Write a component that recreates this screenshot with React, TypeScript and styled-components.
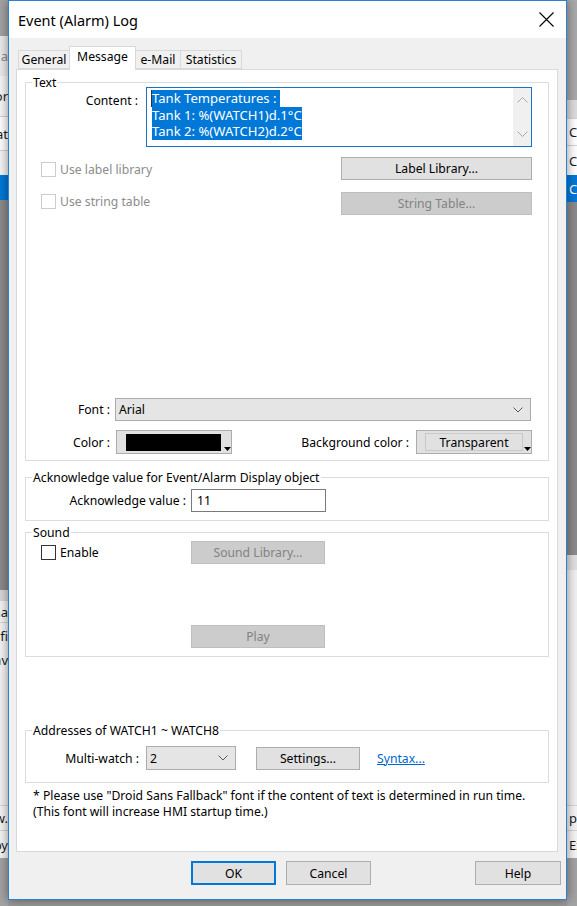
import React from "react";
import styled, { createGlobalStyle } from "styled-components";

const UI_FONT = `"Noto Sans", "Liberation Sans", Arial, sans-serif`;

const GlobalStyle = createGlobalStyle`
  html, body { margin: 0; padding: 0; }
  body { background: #9b9b9b; font-family: ${UI_FONT}; }
  * { box-sizing: border-box; }
`;

type StripRow = { h: number; bg: string; text?: string; color?: string; line?: boolean };

const leftRows: StripRow[] = [
  { h: 36, bg: "#a3a3a3" },
  { h: 40, bg: "#ececec", text: "la", color: "#8a8a8a" },
  { h: 40, bg: "#f7f7f7", text: "or" },
  { h: 34, bg: "#ffffff", text: "at", line: true },
  { h: 25, bg: "#f5f5f5", line: true },
  { h: 25, bg: "#0078d7" },
  { h: 390, bg: "#8b8b8b" },
  { h: 10, bg: "#d8d8d8" },
  { h: 22, bg: "#f4f4f4", text: "na", line: true },
  { h: 26, bg: "#f4f4f4", text: "fi", line: true },
  { h: 24, bg: "#f4f4f4", text: "av" },
  { h: 133, bg: "#f2f2f2" },
  { h: 25, bg: "#f4f4f4", text: "w.", line: true },
  { h: 28, bg: "#f4f4f4", text: "py", line: true },
  { h: 48, bg: "#a3a3a3" },
];

const rightRows: StripRow[] = [
  { h: 100, bg: "#a9a9a9" },
  { h: 18, bg: "#dcdcdc" },
  { h: 27, bg: "#ffffff", text: "C", line: true },
  { h: 30, bg: "#ffffff", text: "C", line: true },
  { h: 27, bg: "#0078d7", text: "C", color: "#ffffff" },
  { h: 353, bg: "#8b8b8b" },
  { h: 15, bg: "#e0e0e0" },
  { h: 235, bg: "#f0f0f0" },
  { h: 25, bg: "#f4f4f4", text: "p", line: true },
  { h: 28, bg: "#f4f4f4", text: "Ex", line: true },
  { h: 48, bg: "#a3a3a3" },
];

const App = () => {
  return (
    <>
      <GlobalStyle />
      <Screen>
        <Backdrop>
          <Strip $w={8} $align="flex-end">
            {leftRows.map((r, i) => (
              <BgRow key={i} $h={r.h} $bg={r.bg} $line={r.line} $color={r.color}>
                {r.text}
              </BgRow>
            ))}
          </Strip>
          <Strip $w={10} $align="flex-start">
            {rightRows.map((r, i) => (
              <BgRow key={i} $h={r.h} $bg={r.bg} $line={r.line} $color={r.color} $pad={2}>
                {r.text}
              </BgRow>
            ))}
          </Strip>
        </Backdrop>

        <Dialog>
          <TitleBar>
            <Title>Event (Alarm) Log</Title>
            <CloseBox>
              <svg width="15" height="15" viewBox="0 0 15 15">
                <path d="M0.5 0.5 L14.5 14.5 M14.5 0.5 L0.5 14.5" stroke="#000" strokeWidth="1.1" />
              </svg>
            </CloseBox>
          </TitleBar>

          <TabStrip>
            <Tab $w={52}>General</Tab>
            <Tab $w={67} $active>Message</Tab>
            <Tab $w={46}>e-Mail</Tab>
            <Tab $w={62}>Statistics</Tab>
          </TabStrip>

          <Panel>
            <Group $h={379}>
              <GroupTitle>Text</GroupTitle>
              <ContentRow>
                <FieldLabel $w={112} $top={5}>Content :</FieldLabel>
                <TextBox>
                  <TextLines>
                    <Line>
                      <Caret />
                      <Sel>Tank Temperatures : </Sel>
                    </Line>
                    <Line>
                      <Sel>Tank 1: %(WATCH1)d.1°C</Sel>
                    </Line>
                    <Line>
                      <Sel>Tank 2: %(WATCH2)d.2°C</Sel>
                    </Line>
                  </TextLines>
                  <ScrollBar>
                    <svg width="11" height="6" viewBox="0 0 11 6">
                      <polyline points="0.5,5.5 5.5,0.5 10.5,5.5" fill="none" stroke="#a8a8a8" />
                    </svg>
                    <svg width="11" height="6" viewBox="0 0 11 6">
                      <polyline points="0.5,0.5 5.5,5.5 10.5,0.5" fill="none" stroke="#a8a8a8" />
                    </svg>
                  </ScrollBar>
                </TextBox>
              </ContentRow>

              <CheckRow $mt={10}>
                <Check $dy={4}>
                  <Box $disabled />
                  <CheckText $disabled>Use label library</CheckText>
                </Check>
                <Button $w={191}>Label Library...</Button>
              </CheckRow>
              <CheckRow $mt={12}>
                <Check $dy={1}>
                  <Box $disabled />
                  <CheckText $disabled>Use string table</CheckText>
                </Check>
                <Button $w={191} $disabled>String Table...</Button>
              </CheckRow>

              <FontRow>
                <FieldLabel $w={84}>Font :</FieldLabel>
                <Select $w={416}>
                  <span>Arial</span>
                  <Chevron />
                </Select>
              </FontRow>
              <ColorRow>
                <FieldLabel $w={84}>Color :</FieldLabel>
                <SwatchButton>
                  <Swatch />
                  <MiniArrow />
                </SwatchButton>
                <BgLabel>Background color :</BgLabel>
                <TransparentButton>
                  <TransparentFace>Transparent</TransparentFace>
                  <MiniArrow />
                </TransparentButton>
              </ColorRow>
            </Group>

            <Group $h={44} $mt={16}>
              <GroupTitle>Acknowledge value for Event/Alarm Display object</GroupTitle>
              <AckRow>
                <FieldLabel $w={160}>Acknowledge value :</FieldLabel>
                <Input>11</Input>
              </AckRow>
            </Group>

            <Group $h={125} $mt={11}>
              <GroupTitle>Sound</GroupTitle>
              <SoundGrid>
                <Check>
                  <Box />
                  <CheckText>Enable</CheckText>
                </Check>
                <Button $w={134} $disabled>Sound Library...</Button>
                <span />
                <Button $w={134} $disabled>Play</Button>
              </SoundGrid>
            </Group>

            <Group $h={53} $mt={73}>
              <GroupTitle>Addresses of WATCH1 ~ WATCH8</GroupTitle>
              <WatchRow>
                <FieldLabel $w={113}>Multi-watch :</FieldLabel>
                <Select $w={90} $h={24}>
                  <span>2</span>
                  <Chevron />
                </Select>
                <Button $w={104} $ml={20}>Settings...</Button>
                <Link>Syntax...</Link>
              </WatchRow>
            </Group>

            <Note>
              * Please use "Droid Sans Fallback" font if the content of text is determined in run time.
              <br />
              (This font will increase HMI startup time.)
            </Note>
          </Panel>

          <Footer>
            <Button $w={85} $h={24} $default>OK</Button>
            <Button $w={85} $h={24}>Cancel</Button>
            <Button $w={86} $h={24} $ml="auto">Help</Button>
          </Footer>
        </Dialog>
      </Screen>
    </>
  );
};

const Chevron = () => (
  <svg width="10" height="6" viewBox="0 0 10 6">
    <polyline points="0.5,0.5 5,5 9.5,0.5" fill="none" stroke="#5a5a5a" />
  </svg>
);

const MiniArrow = () => (
  <svg width="7" height="4" viewBox="0 0 7 4" style={{ alignSelf: "flex-end", marginBottom: 2 }}>
    <polygon points="0,0 7,0 3.5,4" fill="#000" />
  </svg>
);

const Screen = styled.div`
  position: relative;
  width: 577px;
  height: 906px;
  overflow: hidden;
  background: #9b9b9b;
`;

const Backdrop = styled.div`
  display: flex;
  justify-content: space-between;
  height: 100%;
`;

const Strip = styled.div<{ $w: number; $align: string }>`
  width: ${(p) => p.$w}px;
  display: flex;
  flex-direction: column;
  align-items: stretch;
  overflow: hidden;
  & > div {
    justify-content: ${(p) => p.$align};
  }
`;

const BgRow = styled.div<{ $h: number; $bg: string; $line?: boolean; $color?: string; $pad?: number }>`
  height: ${(p) => p.$h}px;
  flex: none;
  background: ${(p) => p.$bg};
  border-top: ${(p) => (p.$line ? "1px solid #d4d4d4" : "none")};
  display: flex;
  align-items: center;
  padding-left: ${(p) => p.$pad || 0}px;
  font-size: 13px;
  color: ${(p) => p.$color || "#1a1a1a"};
  white-space: nowrap;
`;

const Dialog = styled.div`
  position: absolute;
  left: 8px;
  top: 0;
  width: 559px;
  height: 900px;
  border: 1px solid #2b7fd4;
  background: #f0f0f0;
  box-shadow: 0 0 10px rgba(0, 0, 0, 0.45);
  display: flex;
  flex-direction: column;
  font-family: ${UI_FONT};
  font-size: 12.2px;
  color: #000;
`;

const TitleBar = styled.div`
  height: 37px;
  flex: none;
  background: #ffffff;
  display: flex;
  align-items: center;
  justify-content: space-between;
  padding-left: 9px;
`;

const Title = styled.div`
  font-size: 14.5px;
  margin-top: 1px;
`;

const CloseBox = styled.div`
  width: 40px;
  height: 37px;
  display: flex;
  align-items: center;
  justify-content: center;
`;

const TabStrip = styled.div`
  height: 31px;
  flex: none;
  display: flex;
  align-items: flex-end;
  margin: 0 8px 0 7px;
  padding-left: 2px;
  position: relative;
  z-index: 1;
`;

const Tab = styled.div<{ $w: number; $active?: boolean }>`
  width: ${(p) => p.$w}px;
  height: ${(p) => (p.$active ? 24 : 19)}px;
  margin-bottom: ${(p) => (p.$active ? -1 : 0)}px;
  background: ${(p) => (p.$active ? "#ffffff" : "#f0f0f0")};
  border: 1px solid #d9d9d9;
  border-bottom: ${(p) => (p.$active ? "none" : "1px solid #d9d9d9")};
  margin-left: -1px;
  display: flex;
  justify-content: center;
  padding-top: ${(p) => (p.$active ? 2 : 1)}px;
  line-height: 16px;
  &:first-child {
    margin-left: 0;
  }
`;

const Panel = styled.div`
  height: 783px;
  flex: none;
  margin: 0 8px 0 7px;
  background: #ffffff;
  border: 1px solid #d9d9d9;
  padding: 12px 8px 0 8px;
  display: flex;
  flex-direction: column;
`;

const Group = styled.div<{ $h: number; $mt?: number }>`
  position: relative;
  height: ${(p) => p.$h}px;
  flex: none;
  margin-top: ${(p) => p.$mt || 0}px;
  border: 1px solid #dcdcdc;
  display: flex;
  flex-direction: column;
`;

const GroupTitle = styled.div`
  position: absolute;
  top: -8px;
  left: 6px;
  background: #ffffff;
  padding: 0 1px;
  line-height: 15px;
`;

const FieldLabel = styled.div<{ $w: number; $top?: number }>`
  width: ${(p) => p.$w}px;
  flex: none;
  text-align: right;
  padding-top: ${(p) => p.$top || 0}px;
  white-space: nowrap;
`;

const ContentRow = styled.div`
  display: flex;
  align-items: flex-start;
  gap: 8px;
  margin-top: 4px;
`;

const TextBox = styled.div`
  width: 386px;
  height: 60px;
  border: 1px solid #1a72c7;
  display: flex;
  background: #ffffff;
`;

const TextLines = styled.div`
  flex: 1;
  padding: 2px 0 0 5px;
  font-size: 13.1px;
  line-height: 16.5px;
`;

const Line = styled.div`
  height: 16.5px;
  display: flex;
  align-items: stretch;
  white-space: pre;
`;

const Caret = styled.span`
  width: 1px;
  background: #333;
  margin-left: -1px;
`;

const Sel = styled.span`
  background: #0078d7;
  color: #ffffff;
`;

const ScrollBar = styled.div`
  width: 18px;
  flex: none;
  background: #f0f0f0;
  display: flex;
  flex-direction: column;
  align-items: center;
  justify-content: space-between;
  padding: 9px 0 9px;
`;

const CheckRow = styled.div<{ $mt: number }>`
  display: flex;
  align-items: flex-start;
  margin-top: ${(p) => p.$mt}px;
  padding: 0 16px 0 15px;
  justify-content: space-between;
`;

const Check = styled.div<{ $dy?: number }>`
  display: flex;
  align-items: center;
  gap: 4px;
  margin-top: ${(p) => p.$dy || 0}px;
`;

const Box = styled.span<{ $disabled?: boolean }>`
  width: 15px;
  height: 15px;
  border: 1px solid ${(p) => (p.$disabled ? "#cccccc" : "#333333")};
  background: #ffffff;
`;

const CheckText = styled.span<{ $disabled?: boolean }>`
  color: ${(p) => (p.$disabled ? "#8c8c8c" : "#000000")};
`;

const Button = styled.div<{ $w: number; $h?: number; $disabled?: boolean; $default?: boolean; $ml?: number | string }>`
  width: ${(p) => p.$w}px;
  height: ${(p) => p.$h || 23}px;
  flex: none;
  margin-left: ${(p) => (typeof p.$ml === "number" ? `${p.$ml}px` : p.$ml || 0)};
  display: flex;
  align-items: center;
  justify-content: center;
  background: ${(p) => (p.$disabled ? "#cccccc" : "#e1e1e1")};
  border: ${(p) => (p.$default ? "2px solid #0078d7" : `1px solid ${p.$disabled ? "#bfbfbf" : "#adadad"}`)};
  color: ${(p) => (p.$disabled ? "#838383" : "#000000")};
  white-space: nowrap;
`;

const FontRow = styled.div`
  margin-top: auto;
  display: flex;
  align-items: center;
  gap: 5px;
`;

const Select = styled.div<{ $w: number; $h?: number }>`
  width: ${(p) => p.$w}px;
  height: ${(p) => p.$h || 23}px;
  flex: none;
  background: #e5e5e5;
  border: 1px solid #acacac;
  display: flex;
  align-items: center;
  justify-content: space-between;
  padding: 0 7px 0 3px;
`;

const ColorRow = styled.div`
  display: flex;
  align-items: center;
  margin: 9px 16px 6px 0;
`;

const SwatchButton = styled.div`
  width: 116px;
  height: 24px;
  margin-left: 6px;
  background: #e1e1e1;
  border: 1px solid #adadad;
  display: flex;
  align-items: flex-start;
  padding: 3px 0 0 9px;
  gap: 3px;
`;

const Swatch = styled.span`
  width: 96px;
  height: 17px;
  background: #000000;
`;

const BgLabel = styled.div`
  margin-left: auto;
  margin-right: 7px;
  white-space: nowrap;
`;

const TransparentButton = styled.div`
  width: 116px;
  height: 24px;
  background: #e1e1e1;
  border: 1px solid #adadad;
  display: flex;
  align-items: flex-start;
  padding: 2px 0 0 8px;
  gap: 1px;
`;

const TransparentFace = styled.span`
  width: 98px;
  height: 18px;
  border: 1px solid #c9c9c9;
  display: flex;
  align-items: center;
  justify-content: center;
`;

const AckRow = styled.div`
  display: flex;
  align-items: center;
  gap: 5px;
  margin-top: 11px;
`;

const Input = styled.div`
  width: 135px;
  height: 23px;
  border: 1px solid #7a7a7a;
  background: #ffffff;
  display: flex;
  align-items: center;
  padding-left: 5px;
`;

const SoundGrid = styled.div`
  display: grid;
  grid-template-columns: 150px 134px;
  grid-template-rows: 23px 23px;
  row-gap: 61px;
  align-items: center;
  margin-top: 8px;
  padding-left: 15px;
`;

const WatchRow = styled.div`
  display: flex;
  align-items: center;
  margin-top: 15px;
  & > :nth-child(2) {
    margin-left: 7px;
  }
`;

const Link = styled.span`
  margin-left: 17px;
  color: #0066cc;
  text-decoration: underline;
`;

const Note = styled.div`
  margin-top: 5px;
  padding-left: 8px;
  line-height: 16px;
`;

const Footer = styled.div`
  display: flex;
  align-items: flex-start;
  gap: 10px;
  padding: 9px 5px 0 182px;
`;

export default App;
